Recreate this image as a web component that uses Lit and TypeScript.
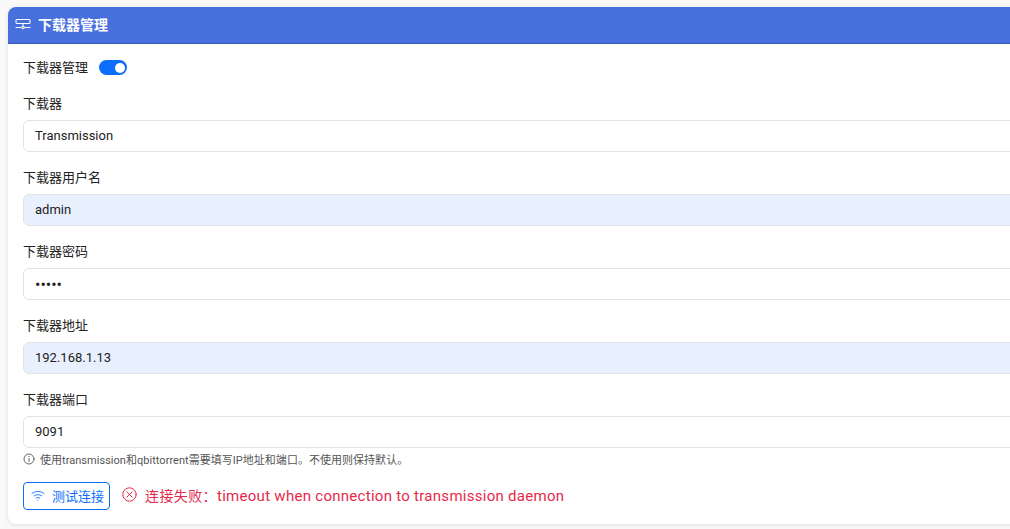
import { LitElement, css, html } from 'lit'
import { customElement } from 'lit/decorators.js'

interface Field {
  label: string
  value: string
  type?: string
  filled?: boolean
}

const FIELDS: Field[] = [
  { label: '下载器', value: 'Transmission' },
  { label: '下载器用户名', value: 'admin', filled: true },
  { label: '下载器密码', value: 'admin', type: 'password' },
  { label: '下载器地址', value: '192.168.1.13', filled: true },
  { label: '下载器端口', value: '9091' },
]

@customElement('app-root')
export class AppRoot extends LitElement {
  static styles = css`
    :host {
      display: block;
      height: 529px;
      overflow: hidden;
      box-sizing: border-box;
      padding: 7px 0 0 8px;
      background: #f9f9fa;
      font-family: 'Roboto', 'Noto Sans CJK SC', sans-serif;
      font-size: 13px;
      color: #222;
    }

    .card {
      margin-right: -20px;
      height: 517px;
      box-sizing: border-box;
      background: #fff;
      border-radius: 8px;
      box-shadow: 0 1px 4px rgba(30, 40, 60, 0.12);
      overflow: hidden;
    }

    .head {
      height: 37px;
      box-sizing: border-box;
      display: flex;
      align-items: center;
      gap: 7px;
      padding: 0 0 2px 7px;
      background: #4870dc;
      border-bottom: 1px solid #3a5aaf;
      color: #fff;
      font-size: 14px;
      font-weight: 700;
    }

    .body {
      padding: 12px 15px 0;
    }

    .switch-row {
      display: flex;
      align-items: center;
      gap: 11px;
      height: 21px;
      margin-bottom: 17px;
    }

    .switch {
      width: 28px;
      height: 15px;
      margin-top: 2px;
      border-radius: 8px;
      background: #0d6efd;
      display: flex;
      align-items: center;
      justify-content: flex-end;
      padding-right: 2px;
      box-sizing: border-box;
    }

    .switch i {
      width: 10px;
      height: 10px;
      border-radius: 50%;
      background: #fff;
    }

    label {
      display: block;
      line-height: 19px;
      margin-bottom: 7px;
    }

    .group {
      margin-bottom: 16px;
    }

    .group.last {
      margin-bottom: 0;
    }

    input {
      display: block;
      width: 100%;
      height: 32px;
      box-sizing: border-box;
      padding: 0 11px 2px;
      border: 1px solid #e1e2e6;
      border-radius: 6px;
      background: #fff;
      color: #222;
      font: inherit;
      outline: none;
    }

    input[type='password'] {
      font-size: 16px;
      padding-bottom: 0;
    }

    input.filled {
      background: #e8f0fe;
    }

    .hint {
      display: flex;
      align-items: center;
      gap: 5px;
      margin-top: 3px;
      height: 16px;
      font-size: 11px;
      letter-spacing: 0.03px;
      color: #555;
    }

    .actions {
      display: flex;
      align-items: center;
      gap: 12px;
      margin-top: 15px;
    }

    .test {
      display: flex;
      align-items: center;
      gap: 7px;
      width: 87px;
      height: 28px;
      box-sizing: border-box;
      padding: 0 7px 1px;
      border: 1px solid #0d6efd;
      border-radius: 4px;
      background: #fff;
      color: #0d6efd;
      font: inherit;
      white-space: nowrap;
    }

    .error {
      display: flex;
      align-items: center;
      gap: 8px;
      padding-bottom: 3px;
      color: #e6294b;
      font-size: 14px;
      letter-spacing: 0.4px;
    }

    .error .detail {
      font-size: 15px;
      letter-spacing: 0.28px;
    }

    svg {
      display: block;
      flex: none;
      fill: none;
      stroke: currentColor;
      stroke-linecap: round;
      stroke-linejoin: round;
    }
  `

  render() {
    return html`
      <div class="card">
        <div class="head">
          <svg width="16" height="16" viewBox="0 0 16 16" stroke-width="1.1">
            <rect x="1" y="3.5" width="14" height="4" rx="1"></rect>
            <path d="M8 7.5v2.8M1 11.5h5M10 11.5h5"></path>
            <circle cx="8" cy="11.5" r="1.2"></circle>
          </svg>
          下载器管理
        </div>
        <div class="body">
          <div class="switch-row">下载器管理<span class="switch"><i></i></span></div>
          ${FIELDS.map(
            (f, i) => html`
              <div class="group ${i === FIELDS.length - 1 ? 'last' : ''}">
                <label>${f.label}</label>
                <input class=${f.filled ? 'filled' : ''} type=${f.type ?? 'text'} .value=${f.value} />
              </div>
            `,
          )}
          <div class="hint">
            <svg width="12" height="12" viewBox="0 0 12 12" stroke-width="0.9">
              <circle cx="6" cy="6" r="5"></circle>
              <path d="M6 5.5v3M6 3.5v.2"></path>
            </svg>
            使用transmission和qbittorrent需要填写IP地址和端口。不使用则保持默认。
          </div>
          <div class="actions">
            <button class="test">
              <svg width="14" height="14" viewBox="0 0 14 14" stroke-width="0.9">
                <path d="M1 4.4c3.4-2.6 8.6-2.6 12 0M3.2 6.8c2.2-1.6 5.4-1.6 7.6 0M5.2 9c1.1-.7 2.5-.7 3.6 0"></path>
                <path d="M7 11v.1"></path>
              </svg>
              测试连接
            </button>
            <div class="error">
              <svg width="15" height="15" viewBox="0 0 15 15" stroke-width="1">
                <circle cx="7.5" cy="7.5" r="6.7"></circle>
                <path d="M5 5l5 5M10 5l-5 5"></path>
              </svg>
              <span>连接失败：<span class="detail">timeout when connection to transmission daemon</span></span>
            </div>
          </div>
        </div>
      </div>
    `
  }
}
